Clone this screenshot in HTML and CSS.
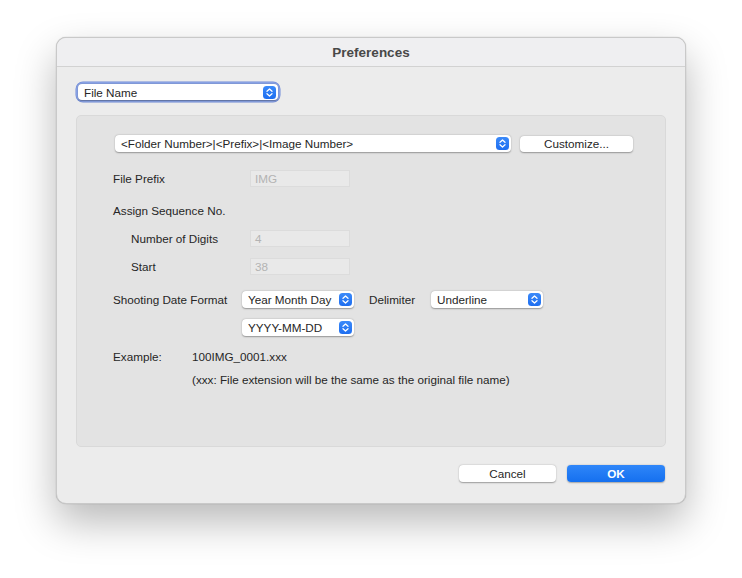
FILE: index.html
```html
<!DOCTYPE html>
<html>
<head>
<meta charset="utf-8">
<link rel="stylesheet" href="styles.css">
</head>
<body>
<div class="window">
  <div class="titlebar">Preferences</div>
  <div class="content">
    <div class="focus-ring">
      <div class="popup popup-main">
        <span class="popup-text">File Name</span>
        <span class="arrows"><svg viewBox="0 0 13 13" width="13" height="13"><path d="M4 5.2 L6.5 3 L9 5.2 M4 7.8 L6.5 10 L9 7.8" fill="none" stroke="#fff" stroke-width="1.3" stroke-linecap="round" stroke-linejoin="round"/></svg></span>
      </div>
    </div>
    <div class="group">
      <div class="row row-format">
        <div class="popup popup-format">
          <span class="popup-text">&lt;Folder Number&gt;|&lt;Prefix&gt;|&lt;Image Number&gt;</span>
          <span class="arrows"><svg viewBox="0 0 13 13" width="13" height="13"><path d="M4 5.2 L6.5 3 L9 5.2 M4 7.8 L6.5 10 L9 7.8" fill="none" stroke="#fff" stroke-width="1.3" stroke-linecap="round" stroke-linejoin="round"/></svg></span>
        </div>
        <div class="button btn-customize">Customize...</div>
      </div>
      <div class="row row-prefix">
        <span class="label">File Prefix</span>
        <div class="field">IMG</div>
      </div>
      <div class="row row-assign">
        <span class="label">Assign Sequence No.</span>
      </div>
      <div class="row row-digits indent">
        <span class="label label-indent">Number of Digits</span>
        <div class="field">4</div>
      </div>
      <div class="row row-start indent">
        <span class="label label-indent">Start</span>
        <div class="field">38</div>
      </div>
      <div class="row row-date">
        <span class="label label-date">Shooting Date Format</span>
        <div class="popup popup-small">
          <span class="popup-text">Year Month Day</span>
          <span class="arrows"><svg viewBox="0 0 13 13" width="13" height="13"><path d="M4 5.2 L6.5 3 L9 5.2 M4 7.8 L6.5 10 L9 7.8" fill="none" stroke="#fff" stroke-width="1.3" stroke-linecap="round" stroke-linejoin="round"/></svg></span>
        </div>
        <span class="label label-delim">Delimiter</span>
        <div class="popup popup-small">
          <span class="popup-text">Underline</span>
          <span class="arrows"><svg viewBox="0 0 13 13" width="13" height="13"><path d="M4 5.2 L6.5 3 L9 5.2 M4 7.8 L6.5 10 L9 7.8" fill="none" stroke="#fff" stroke-width="1.3" stroke-linecap="round" stroke-linejoin="round"/></svg></span>
        </div>
      </div>
      <div class="row row-ymd">
        <div class="popup popup-small">
          <span class="popup-text">YYYY-MM-DD</span>
          <span class="arrows"><svg viewBox="0 0 13 13" width="13" height="13"><path d="M4 5.2 L6.5 3 L9 5.2 M4 7.8 L6.5 10 L9 7.8" fill="none" stroke="#fff" stroke-width="1.3" stroke-linecap="round" stroke-linejoin="round"/></svg></span>
        </div>
      </div>
      <div class="row row-example">
        <span class="label label-example">Example:</span>
        <span class="value">100IMG_0001.xxx</span>
      </div>
      <div class="row row-note">
        <span class="value">(xxx: File extension will be the same as the original file name)</span>
      </div>
    </div>
    <div class="actions">
      <div class="button btn-cancel">Cancel</div>
      <div class="button btn-ok">OK</div>
    </div>
  </div>
</div>
</body>
</html>
```

FILE: styles.css
```css
html, body {
  margin: 0;
  padding: 0;
  background: #ffffff;
}
body {
  padding: 37px 0 0 56px;
  min-height: 578px;
  box-sizing: border-box;
  font-family: "Liberation Sans", Arial, sans-serif;
  font-size: 11.7px;
  color: #262626;
}
.window {
  width: 630px;
  height: 467px;
  box-sizing: border-box;
  background: #ececec;
  border: 1px solid #c9c9c9;
  border-radius: 10px;
  box-shadow: 0 18px 40px rgba(0,0,0,0.28), 0 0 1px rgba(0,0,0,0.35);
  overflow: hidden;
  display: flex;
  flex-direction: column;
}
.titlebar {
  height: 28px;
  flex: none;
  background: #efeff1;
  border-bottom: 1px solid #d2d2d2;
  display: flex;
  align-items: center;
  justify-content: center;
  font-weight: bold;
  font-size: 13.5px;
  color: #484848;
}
.content {
  padding: 15px 19px 0 19px;
  display: flex;
  flex-direction: column;
}
.focus-ring {
  width: 204px;
  height: 20px;
  box-sizing: border-box;
  border-radius: 7px;
  background: #8aa3e6;
  padding: 2px;
  box-shadow: 0 0 0 0.5px #6f8ad8;
}
.popup {
  height: 17px;
  box-sizing: border-box;
  background: #ffffff;
  border-radius: 4px;
  box-shadow: 0 0.5px 1.5px rgba(0,0,0,0.35);
  display: flex;
  align-items: center;
  justify-content: space-between;
  padding: 0 2px 0 6px;
  color: #262626;
}
.popup-main {
  height: 16px;
  width: 200px;
}
.arrows {
  width: 13px;
  height: 13px;
  border-radius: 3.5px;
  background: linear-gradient(#3b8af9, #1e6ef0);
  display: flex;
}
.group {
  margin-top: 13px;
  width: 590px;
  height: 332px;
  box-sizing: border-box;
  background: #e3e3e3;
  border: 1px solid #d9d9d9;
  border-radius: 5px;
  padding: 19px 0 0 36px;
  display: flex;
  flex-direction: column;
}
.row {
  display: flex;
  align-items: center;
  height: 17px;
  flex: none;
}
.row-format {
  padding-left: 2px;
}
.popup-format {
  width: 396px;
}
.button {
  height: 16px;
  box-sizing: border-box;
  background: #ffffff;
  border-radius: 4px;
  box-shadow: 0 0.5px 1.5px rgba(0,0,0,0.35);
  display: flex;
  align-items: center;
  justify-content: center;
  color: #262626;
}
.btn-customize {
  width: 113px;
  margin-left: 9px;
}
.label {
  width: 137px;
  flex: none;
}
.label-indent {
  width: 119px;
  padding-left: 18px;
}
.field {
  width: 100px;
  height: 17px;
  box-sizing: border-box;
  background: #e9e9e9;
  border: 1px solid #dcdcdc;
  color: #b3b3b3;
  padding-left: 4px;
  display: flex;
  align-items: center;
}
.row-prefix { margin-top: 18px; }
.row-assign { margin-top: 15px; }
.row-digits { margin-top: 11px; }
.row-start { margin-top: 11px; }
.row-date { margin-top: 16px; }
.row-ymd { margin-top: 11px; padding-left: 129px; }
.row-example { margin-top: 12px; }
.row-note { margin-top: 6px; padding-left: 79px; }
.label-date { width: 129px; }
.popup-small { width: 112px; }
.label-delim { width: 62px; margin-left: 15px; }
.label-example { width: 79px; }
.actions {
  margin-top: 18px;
  display: flex;
  justify-content: flex-end;
  gap: 11px;
  padding-right: 1px;
}
.btn-cancel {
  width: 97px;
  height: 17px;
}
.btn-ok {
  width: 98px;
  height: 17px;
  background: linear-gradient(#2f86f9, #1570ef);
  color: #ffffff;
  font-weight: bold;
  box-shadow: 0 0.5px 1.5px rgba(0,0,0,0.3);
}
```
